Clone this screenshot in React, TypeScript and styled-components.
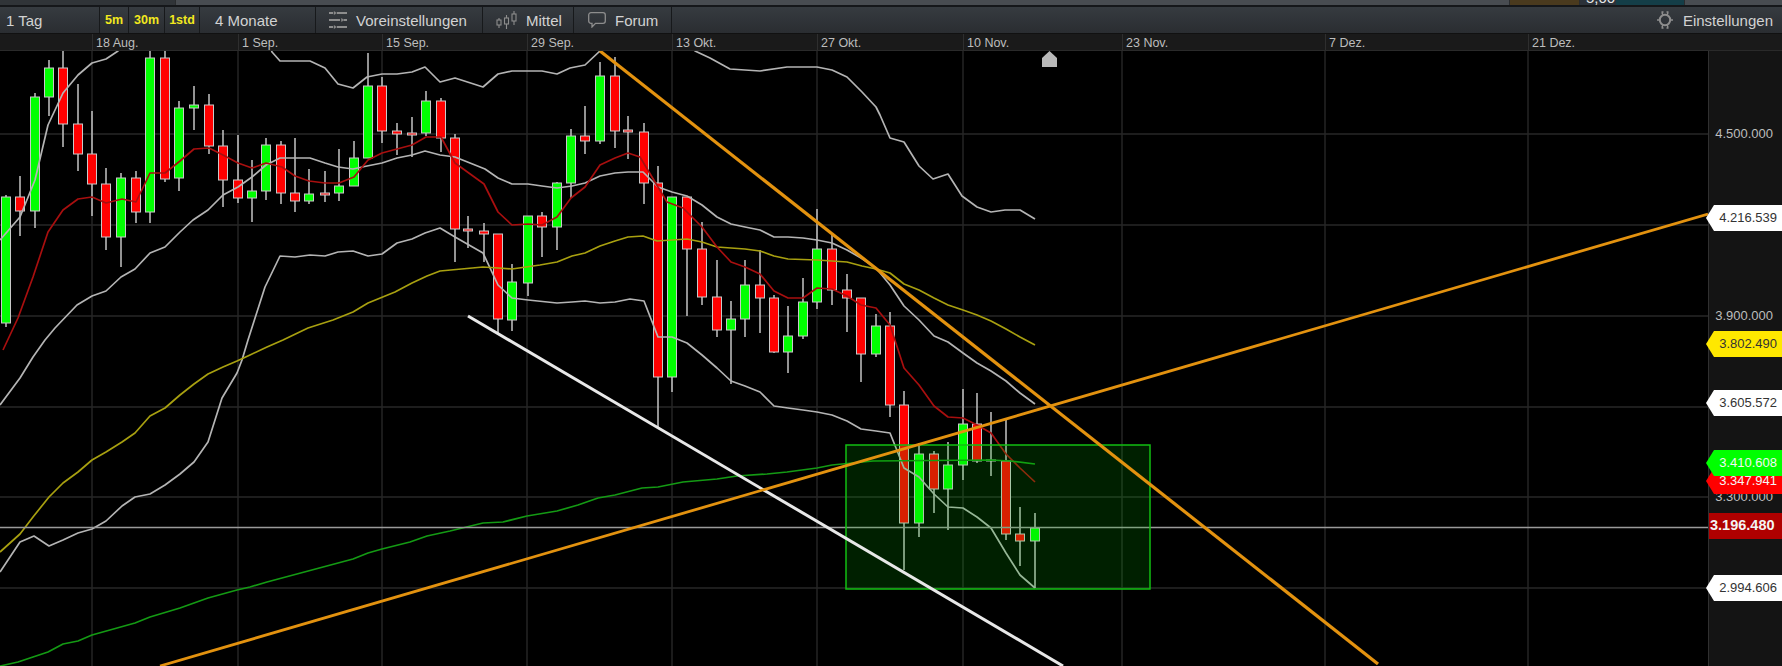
import React from 'react';
import styled, { createGlobalStyle } from 'styled-components';

const CHART_TOP = 51;

const GlobalStyle = createGlobalStyle`
  html, body {
    margin: 0;
    padding: 0;
    background: #000;
    overflow: hidden;
  }
  body {
    font-family: "Liberation Sans", Arial, sans-serif;
  }
`;

const Page = styled.div`
  width: 1782px;
  height: 666px;
  display: flex;
  flex-direction: column;
  background: #000;
`;

// the row of the panel above, only its lower edge is in the picture
const TopStrip = styled.div`
  height: 5px;
  display: flex;
  overflow: hidden;
  background: #484c51;
  border-bottom: 2px solid #15171a;
`;

const StripBlock = styled.div<{ $width: number; $color: string }>`
  width: ${(p) => p.$width}px;
  flex: none;
  background: ${(p) => p.$color};
  border-right: 1px solid #2a2c2e;
`;

const StripValue = styled.div`
  width: 36px;
  flex: none;
  background: #2b3139;
  color: #e6e6e6;
  font-size: 15px;
  line-height: 15px;
  margin-top: -10px;
  padding-left: 6px;
  box-sizing: border-box;
`;

const Toolbar = styled.div`
  height: 26px;
  display: flex;
  align-items: stretch;
  background: linear-gradient(#363b40, #2a2d31);
  border-bottom: 1px solid #111;
  box-sizing: content-box;
`;

const Segment = styled.div<{ $width: number; $pad?: number }>`
  width: ${(p) => p.$width}px;
  flex: none;
  box-sizing: border-box;
  display: flex;
  align-items: center;
  gap: 9px;
  padding-left: ${(p) => p.$pad ?? 0}px;
  border-right: 1px solid #17191b;
  color: #d2d2d2;
  font-size: 15px;
  white-space: nowrap;
`;

const RangeButton = styled(Segment)`
  color: #f2e81e;
  font-size: 12.5px;
  font-weight: 700;
  justify-content: center;
  padding-left: 0;
`;

const Settings = styled.div`
  margin-left: auto;
  display: flex;
  align-items: center;
  gap: 9px;
  padding-right: 9px;
  color: #d2d2d2;
  font-size: 15px;
`;

const DateAxis = styled.div`
  height: 16px;
  display: flex;
  flex: none;
  background: #1a1a1a;
  border-bottom: 1px solid #2a2a2a;
`;

const DateCell = styled.div<{ $width: number }>`
  width: ${(p) => p.$width}px;
  flex: none;
  box-sizing: border-box;
  padding: 2px 0 0 3px;
  border-left: 1px solid #2e2e2e;
  color: #bdbdbd;
  font-size: 12.5px;
  line-height: 14px;
  &:first-child {
    border-left: 0;
  }
`;

const ChartRow = styled.div`
  flex: 1;
  display: flex;
  min-height: 0;
`;

const Plot = styled.svg`
  width: 1708px;
  height: 615px;
  flex: none;
  display: block;
  background: #000;
`;

const PriceAxis = styled.div`
  position: relative;
  flex: 1;
  background: #141414;
  border-left: 1px solid #303030;
`;

const PriceTick = styled.div<{ $y: number }>`
  position: absolute;
  top: ${(p) => p.$y - CHART_TOP - 8}px;
  right: 9px;
  color: #bdbdbd;
  font-size: 13px;
  line-height: 16px;
`;

const PriceTag = styled.div<{ $y: number; $bg: string; $fg: string }>`
  position: absolute;
  top: ${(p) => p.$y - CHART_TOP - 13}px;
  left: -3px;
  right: 0;
  height: 26px;
  box-sizing: border-box;
  padding-right: 5px;
  text-align: right;
  background: ${(p) => p.$bg};
  color: ${(p) => p.$fg};
  font-size: 13px;
  line-height: 25px;
  clip-path: polygon(0 50%, 8px 0, 100% 0, 100% 100%, 8px 100%);
`;

const LastPrice = styled.div<{ $y: number }>`
  position: absolute;
  top: ${(p) => p.$y - CHART_TOP - 13}px;
  left: 0;
  right: 0;
  height: 26px;
  padding-left: 1px;
  background: #b00000;
  color: #f4f4f4;
  font-size: 14.5px;
  font-weight: 700;
  line-height: 25px;
`;

const GridLine = styled.line`
  stroke: #272727;
  stroke-width: 1.4;
`;

const Wick = styled.line`
  stroke: #c4c4c4;
  stroke-width: 1.5;
`;

const Body = styled.rect<{ $up: boolean }>`
  fill: ${(p) => (p.$up ? '#00ff00' : '#ff0000')};
  stroke: #c9c9c9;
  stroke-width: 1;
`;

const Series = styled.polyline<{ $color: string }>`
  fill: none;
  stroke: ${(p) => p.$color};
  stroke-width: 1.7;
  stroke-linejoin: round;
`;

const PriceLine = styled.line`
  stroke: #9a9a9a;
  stroke-width: 1.6;
`;

const TrendLine = styled.line<{ $color: string; $w: number }>`
  stroke: ${(p) => p.$color};
  stroke-width: ${(p) => p.$w};
`;

const Zone = styled.rect`
  fill: rgba(0, 200, 0, 0.16);
  stroke: #12bf12;
  stroke-width: 1.5;
`;

const Marker = styled.polygon`
  fill: #b9b9b9;
`;

const IconSvg = styled.svg`
  flex: none;
  display: block;
  fill: none;
  stroke: #8d8d8d;
`;

const SlidersIcon = () => (
  <IconSvg width="18" height="18" viewBox="0 0 18 18" strokeWidth="2">
    <path d="M0 2h4M8 2h10M0 9h11M15 9h3M0 16h4M8 16h10" />
    <path d="M5 0.5l2.5 1.5L5 3.5zM12.5 7.5L15 9l-2.5 1.5zM5 14.5l2.5 1.5L5 17.5z" fill="#8d8d8d" strokeWidth="0.5" />
  </IconSvg>
);

const CandlesIcon = () => (
  <IconSvg width="21" height="18" viewBox="0 0 21 18" strokeWidth="1.1">
    <path d="M3 7v10M10.5 4v14M18 0v14" />
    <rect x="1" y="9" width="4" height="5" fill="#2f3337" />
    <rect x="8.5" y="7" width="4" height="6" fill="#2f3337" />
    <rect x="16" y="3" width="4" height="7" fill="#2f3337" />
  </IconSvg>
);

const BubbleIcon = () => (
  <IconSvg width="18" height="16" viewBox="0 0 18 16" strokeWidth="1.3">
    <path d="M3 0.7h12a2.3 2.3 0 0 1 2.3 2.3v6a2.3 2.3 0 0 1-2.3 2.3H7.5L4 15V11.3H3A2.3 2.3 0 0 1 0.7 9V3A2.3 2.3 0 0 1 3 0.7z" />
  </IconSvg>
);

const GearIcon = () => (
  <IconSvg width="18" height="18" viewBox="0 0 18 18" strokeWidth="2">
    <circle cx="9" cy="9" r="5.2" />
    <path d="M5.500 1h2M10.500 1h2M5.500 17h2M10.500 17h2M1 9h2M15 9h2M6 1.500l1 3M12 1.500l-1 3M6 16.500l1-3M12 16.500l-1-3" strokeWidth="1.5" />
  </IconSvg>
);

type Candle = [x: number, up: 0 | 1, top: number, bottom: number, wickTop: number, wickBottom: number];

const candles: Candle[] = [
  [6, 1, 197, 323, 195, 327], [20, 0, 197, 211, 176, 236], [35, 1, 97, 211, 93, 228],
  [49, 1, 68, 97, 60, 116], [63, 0, 68, 124, 51, 147], [78, 0, 124, 154, 84, 171],
  [92, 0, 154, 184, 111, 216], [106, 0, 184, 237, 168, 250], [121, 1, 178, 237, 173, 267],
  [136, 0, 178, 212, 171, 223], [150, 1, 58, 212, 51, 223], [165, 0, 58, 179, 51, 182],
  [179, 1, 108, 178, 101, 191], [194, 1, 105, 108, 86, 130], [209, 0, 105, 146, 94, 154],
  [223, 0, 146, 180, 130, 207], [238, 0, 180, 198, 135, 203], [252, 1, 191, 198, 160, 222],
  [266, 1, 145, 191, 138, 200], [281, 0, 145, 193, 141, 204], [295, 0, 193, 201, 138, 212],
  [309, 1, 194, 201, 169, 204], [325, 0, 193, 195, 171, 202], [339, 1, 186, 193, 149, 201],
  [354, 1, 158, 186, 141, 186], [368, 1, 86, 158, 53, 158], [382, 0, 86, 131, 77, 143],
  [397, 0, 131, 134, 123, 155], [412, 0, 133, 135, 117, 157], [426, 1, 101, 133, 91, 136],
  [441, 0, 101, 138, 98, 152], [455, 0, 138, 229, 134, 262], [468, 0, 229, 231, 216, 248],
  [484, 0, 231, 234, 223, 262], [498, 0, 234, 319, 234, 333], [512, 1, 282, 320, 264, 331],
  [528, 1, 216, 283, 216, 296], [542, 0, 216, 227, 212, 257], [557, 1, 183, 227, 182, 250],
  [571, 1, 136, 183, 129, 198], [585, 0, 136, 141, 106, 154], [600, 1, 76, 141, 62, 144],
  [615, 0, 76, 131, 57, 148], [628, 0, 130, 132, 116, 159], [644, 0, 132, 183, 123, 204],
  [658, 0, 183, 377, 166, 427], [672, 1, 197, 377, 197, 392], [687, 0, 197, 249, 197, 316],
  [702, 0, 249, 297, 222, 305], [717, 0, 297, 330, 260, 337], [731, 1, 319, 330, 301, 384],
  [745, 1, 285, 319, 260, 337], [760, 0, 285, 298, 250, 333], [774, 0, 298, 352, 295, 353],
  [788, 1, 336, 352, 306, 373], [803, 1, 302, 336, 278, 339], [817, 1, 249, 302, 209, 309],
  [832, 0, 249, 290, 233, 305], [847, 0, 290, 298, 274, 332], [861, 0, 298, 354, 298, 382],
  [876, 1, 326, 354, 314, 357], [890, 0, 326, 405, 312, 417], [904, 0, 405, 523, 391, 570],
  [919, 1, 454, 523, 443, 537], [934, 0, 454, 489, 451, 513], [948, 1, 465, 489, 442, 530],
  [963, 1, 424, 465, 389, 480], [977, 0, 424, 461, 393, 463], [991, 1, 460, 461, 412, 476],
  [1006, 0, 461, 534, 418, 540], [1020, 0, 534, 541, 507, 566], [1035, 1, 528, 541, 513, 588],
];

const upperBand =
  '0,240 20,217 35,180 48,125 63,93 78,75 92,63 106,59 118,51 125,30 265,30 272,52 280,61 310,61 325,68 338,84 353,88 367,77 382,74 397,74 412,72 425,67 440,82 455,78 483,87 498,74 512,71 542,71 557,74 570,68 585,65 600,51 607,30 688,30 695,51 710,58 730,69 760,71 787,67 817,67 832,70 847,77 862,92 876,107 880,115 890,138 904,142 919,166 933,179 948,174 962,196 977,207 991,212 1005,210 1020,210 1035,219';
const middleBand =
  '0,405 20,378 33,357 45,340 55,328 77,305 92,296 106,291 121,277 135,269 150,253 165,247 180,232 193,220 208,210 223,195 238,187 252,177 266,165 280,158 310,158 325,163 338,167 353,169 367,166 382,163 397,158 412,155 425,151 440,155 455,157 485,169 498,178 512,184 528,184 542,186 557,188 572,186 585,183 600,176 615,173 628,172 643,172 658,187 672,192 687,196 702,205 717,217 731,224 745,227 760,230 774,237 788,237 803,238 817,240 832,243 847,250 861,258 876,268 890,285 904,306 919,320 934,336 948,342 963,353 977,363 991,371 1006,381 1020,393 1035,404';
const lowerBand =
  '0,572 10,557 20,542 34,536 49,546 63,540 78,533 92,529 106,521 122,506 135,497 150,494 165,485 180,474 194,462 208,442 215,420 222,398 237,373 242,360 248,340 265,287 280,256 295,257 310,255 325,256 338,252 353,251 368,256 382,254 397,243 412,239 425,233 440,228 455,237 483,253 498,285 512,298 528,300 557,303 572,302 585,301 600,303 615,302 630,299 644,301 658,337 672,337 687,343 702,355 717,368 731,381 745,386 760,392 774,406 788,408 803,410 817,412 832,415 847,421 861,429 876,431 890,433 904,468 919,477 934,494 948,507 963,508 977,517 991,528 1006,553 1020,575 1035,588';
const redAverage =
  '3,350 18,318 33,277 48,232 63,210 78,199 92,197 106,203 122,199 136,202 150,173 165,173 180,161 194,149 209,148 223,155 238,163 252,168 266,163 282,167 295,176 309,181 325,183 339,183 354,177 368,160 382,153 397,149 412,145 426,137 441,137 455,163 484,184 498,212 512,225 528,224 542,225 557,217 571,198 585,187 600,165 615,158 628,153 640,157 667,202 683,208 702,227 717,247 731,262 745,267 760,274 774,291 788,298 803,298 817,288 832,289 847,296 861,305 876,308 890,325 904,368 919,385 934,406 948,417 963,418 977,425 991,433 1006,454 1020,468 1035,482';
const yellowAverage =
  '0,552 20,534 33,517 49,497 63,483 78,472 92,460 106,452 122,442 135,433 150,416 165,408 180,395 194,384 208,374 223,367 237,361 250,355 267,347 283,340 308,328 333,320 353,312 368,303 395,292 412,283 427,276 440,271 483,267 498,268 512,269 540,265 557,262 572,256 585,253 600,246 615,241 628,237 643,236 657,241 687,239 702,242 717,247 731,248 745,249 760,251 774,256 788,259 817,260 847,262 862,266 876,269 890,273 904,284 919,290 934,298 948,305 963,310 977,315 991,321 1006,329 1020,337 1035,345';
const greenAverage =
  '0,666 18,662 33,657 48,652 63,644 78,641 92,635 135,623 150,617 180,608 208,598 237,590 250,587 267,582 353,559 368,553 382,549 410,542 427,536 450,531 483,523 503,522 527,516 557,511 578,505 598,498 615,495 642,488 658,487 683,482 717,479 737,476 767,474 787,472 817,468 832,465 873,461 990,460 1010,461 1035,464';

const gridX = [92, 238, 382, 527, 672, 817, 963, 1122, 1325, 1528];
const gridY = [134, 225, 316, 407, 497, 588];
const dates: [string, number][] = [
  ['', 92], ['18 Aug.', 146], ['1 Sep.', 144], ['15 Sep.', 145], ['29 Sep.', 145], ['13 Okt.', 145],
  ['27 Okt.', 146], ['10 Nov.', 159], ['23 Nov.', 203], ['7 Dez.', 203], ['21 Dez.', 254],
];

const App: React.FC = () => {
  return (
    <Page>
      <GlobalStyle />
      <TopStrip>
        <StripBlock $width={175} $color="#303438" />
        <StripBlock $width={1333} $color="#484c51" />
        <StripBlock $width={69} $color="#4a3a1e" />
        <StripValue>5,00</StripValue>
        <StripBlock $width={68} $color="#143e48" />
      </TopStrip>

      <Toolbar>
        <Segment $width={100} $pad={6}>1 Tag</Segment>
        <RangeButton $width={29}>5m</RangeButton>
        <RangeButton $width={36}>30m</RangeButton>
        <RangeButton $width={35}>1std</RangeButton>
        <Segment $width={116} $pad={15}>4 Monate</Segment>
        <Segment $width={167} $pad={13}><SlidersIcon />Voreinstellungen</Segment>
        <Segment $width={91} $pad={13}><CandlesIcon />Mittel</Segment>
        <Segment $width={98} $pad={14}><BubbleIcon />Forum</Segment>
        <Settings><GearIcon />Einstellungen</Settings>
      </Toolbar>

      <DateAxis>
        {dates.map(([label, width]) => (
          <DateCell key={label || 'start'} $width={width}>{label}</DateCell>
        ))}
      </DateAxis>

      <ChartRow>
        <Plot viewBox={`0 ${CHART_TOP} 1708 615`}>
          {gridX.map((x) => <GridLine key={x} x1={x} x2={x} y1={CHART_TOP} y2={666} />)}
          {gridY.map((y) => <GridLine key={y} x1={0} x2={1708} y1={y} y2={y} />)}

          {candles.map(([x, up, top, bottom, wickTop, wickBottom]) => (
            <g key={x}>
              <Wick x1={x} x2={x} y1={wickTop} y2={wickBottom} />
              <Body $up={up === 1} x={x - 4.5} y={top} width={9} height={bottom - top} />
            </g>
          ))}

          <Series $color="#b4b4b4" points={upperBand} />
          <Series $color="#b4b4b4" points={middleBand} />
          <Series $color="#b4b4b4" points={lowerBand} />
          <Series $color="#a8a010" points={yellowAverage} />
          <Series $color="#a80f0f" points={redAverage} />
          <Series $color="#149a14" points={greenAverage} />
          <PriceLine x1={0} x2={1708} y1={527.500} y2={527.500} />

          <Zone x={846} y={445} width={304} height={144} />

          <TrendLine $color="#e8e8e8" $w={3} x1={468} y1={316} x2={1063} y2={666} />
          <TrendLine $color="#e3920f" $w={3.2} x1={600} y1={51} x2={1378} y2={664} />
          <TrendLine $color="#e3920f" $w={2.8} x1={160} y1={666} x2={1708} y2={214} />
          <Marker points="1042,58 1049.500,51 1057,58 1057,67 1042,67" />
        </Plot>

        <PriceAxis>
          <PriceTick $y={134}>4.500.000</PriceTick>
          <PriceTick $y={316}>3.900.000</PriceTick>
          <PriceTick $y={497}>3.300.000</PriceTick>
          <PriceTag $y={218} $bg="#fff" $fg="#333">4.216.539</PriceTag>
          <PriceTag $y={344} $bg="#ffe800" $fg="#333">3.802.490</PriceTag>
          <PriceTag $y={403} $bg="#fff" $fg="#333">3.605.572</PriceTag>
          <PriceTag $y={481} $bg="#ff0000" $fg="#f6f6f6">3.347.941</PriceTag>
          <PriceTag $y={463} $bg="#00ff00" $fg="#f6f6f6">3.410.608</PriceTag>
          <LastPrice $y={526}>3.196.480</LastPrice>
          <PriceTag $y={588} $bg="#fff" $fg="#333">2.994.606</PriceTag>
        </PriceAxis>
      </ChartRow>
    </Page>
  );
};

export default App;
